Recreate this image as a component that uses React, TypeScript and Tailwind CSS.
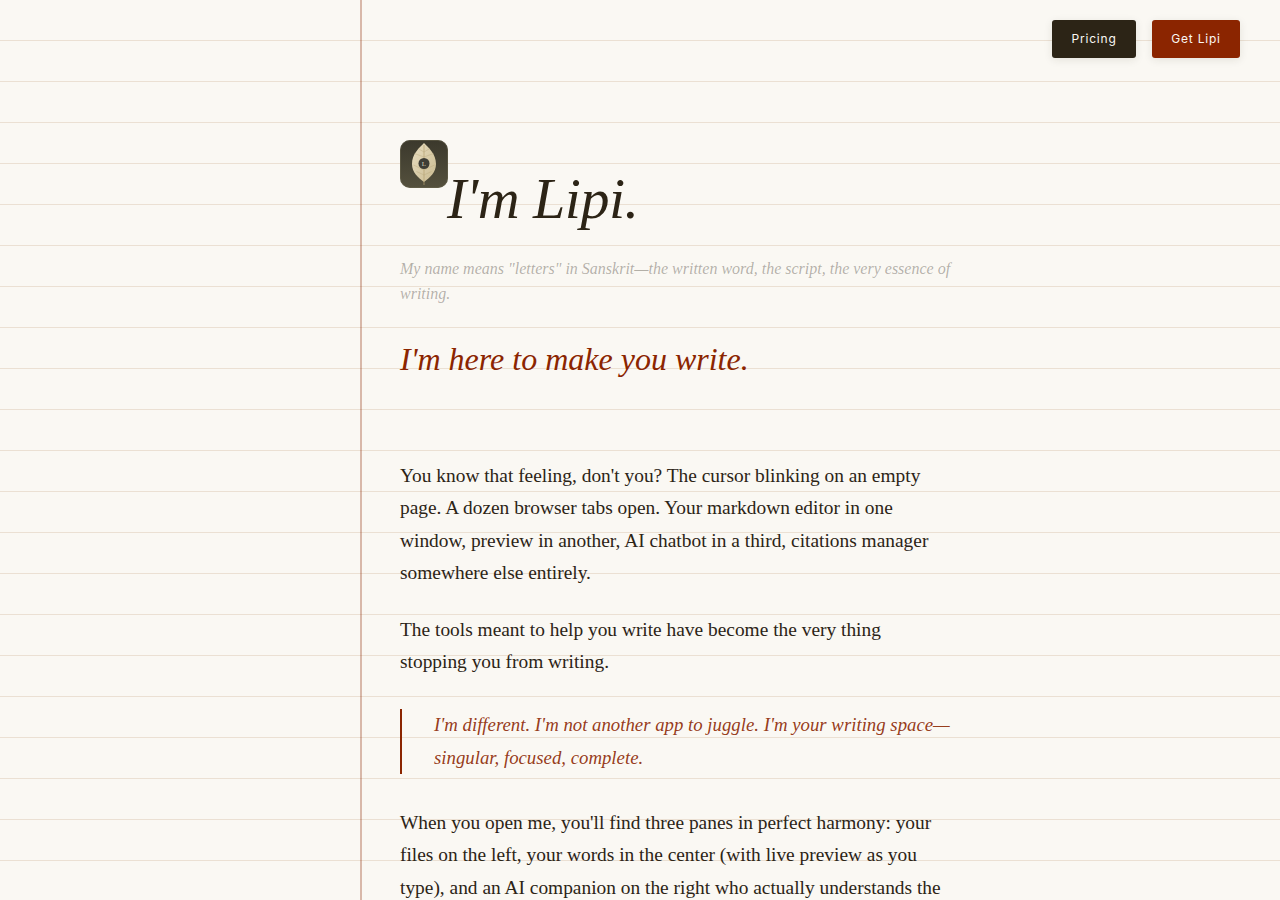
import React from "react";

function LeafLogo() {
  return (
    <svg width="48" height="48" viewBox="0 0 48 48" className="shrink-0 rounded-[10px]">
      <defs>
        <linearGradient id="tile" x1="0" y1="0" x2="0" y2="1">
          <stop offset="0" stopColor="#3b382c" />
          <stop offset="1" stopColor="#54503d" />
        </linearGradient>
        <linearGradient id="leaf" x1="0" y1="0" x2="1" y2="1">
          <stop offset="0" stopColor="#eadfc2" />
          <stop offset="1" stopColor="#c9ba90" />
        </linearGradient>
      </defs>
      <rect width="48" height="48" fill="url(#tile)" />
      <path d="M24 3C29 8 36 14 36 24C36 32.5 30 37.5 24 42C18 37.5 12 32.5 12 24C12 14 19 8 24 3Z" fill="url(#leaf)" />
      <path d="M24 5V45" stroke="#b5a271" strokeWidth="0.7" fill="none" />
      <path d="M24 12L18 8.5M24 12L30 8.5M24 17L14.5 13.5M24 17L33.5 13.5M24 30L13.5 25M24 30L34.5 25M24 35L16.5 31.5M24 35L31.5 31.5" stroke="#b8a678" strokeWidth="0.4" fill="none" />
      <circle cx="24" cy="23.5" r="5.5" fill="#3e3d36" />
      <text x="24" y="26" textAnchor="middle" fontSize="7" fill="#d8d2bc" fontFamily="Liberation Serif, serif">L</text>
      <rect x="0.5" y="0.5" width="47" height="47" rx="9.5" fill="none" stroke="#6b674f" strokeOpacity="0.5" />
    </svg>
  );
}

export default function App() {
  return (
    <div className="relative h-[900px] overflow-hidden bg-[#faf8f3] bg-[repeating-linear-gradient(#faf8f3_0px,#faf8f3_40px,#ebe0d3_40px,#ebe0d3_41px)] font-['Liberation_Serif',serif] text-[#2c2416]">
      <div className="absolute top-0 bottom-0 left-[360px] w-[2px] bg-[#8b2500] opacity-30" />

      <nav className="relative flex justify-end gap-4 pt-5 pr-10 font-['Inter',sans-serif] text-[12px] font-normal tracking-[0.8px] text-[#faf8f3]">
        <button className="h-[38px] w-[84px] rounded-[3px] bg-[#2c2416] shadow-[0_2px_8px_rgba(44,36,22,0.1)]">Pricing</button>
        <button className="h-[38px] w-[88px] rounded-[3px] bg-[#8b2500] shadow-[0_2px_8px_rgba(44,36,22,0.1)]">Get Lipi</button>
      </nav>

      <main className="relative ml-[400px] w-[552px] pt-[82px]">
        <div className="flex h-[92px]">
          <LeafLogo />
          <h1 className="mt-[21px] -ml-[1px] text-[58px] leading-[76px] font-normal tracking-[-0.5px] whitespace-nowrap italic">
            I'm Lipi.
          </h1>
        </div>

        <p className="mt-[24px] text-[16px] leading-[25px] whitespace-nowrap text-[#2c2416]/35 italic">
          My name means "letters" in Sanskrit—the written word, the script, the very essence of
          <br />
          writing.
        </p>

        <h2 className="mt-[30px] text-[32px] leading-[46px] font-normal whitespace-nowrap text-[#8b2500] italic">
          I'm here to make you write.
        </h2>

        <div className="mt-[78px] text-[19.4px] leading-[32.4px] whitespace-nowrap text-[#2c2416]">
          <p>
            You know that feeling, don't you? The cursor blinking on an empty
            <br />
            page. A dozen browser tabs open. Your markdown editor in one
            <br />
            window, preview in another, AI chatbot in a third, citations manager
            <br />
            somewhere else entirely.
          </p>
          <p className="mt-[24px]">
            The tools meant to help you write have become the very thing
            <br />
            stopping you from writing.
          </p>
          <blockquote className="mt-[31px] border-l-2 border-[#8b2500] pl-8 text-[18.8px] text-[#8b2500]/90 italic">
            I'm different. I'm not another app to juggle. I'm your writing space—
            <br />
            singular, focused, complete.
          </blockquote>
          <p className="mt-[32.5px]">
            When you open me, you'll find three panes in perfect harmony: your
            <br />
            files on the left, your words in the center (with live preview as you
            <br />
            type), and an AI companion on the right who actually understands the
          </p>
        </div>
      </main>
    </div>
  );
}
